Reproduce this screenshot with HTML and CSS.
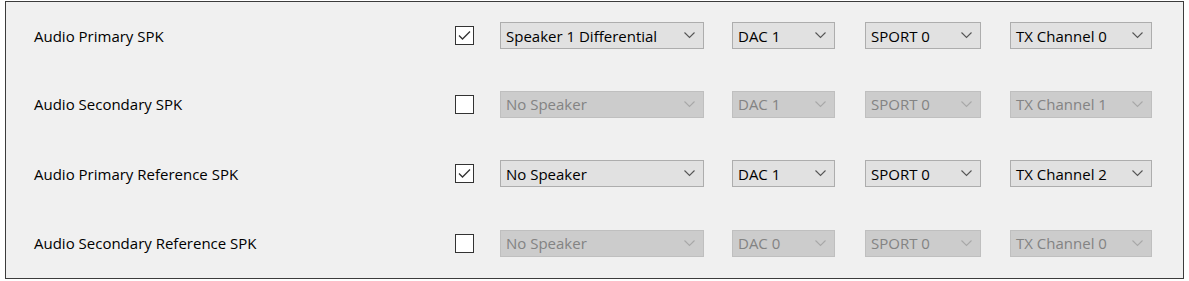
FILE: index.html
```html
<!DOCTYPE html>
<html lang="en">
<head>
    <meta charset="UTF-8">
    <title>Audio Speaker Routing</title>
    <link rel="stylesheet" href="styles.css">
</head>
<body>

    <div class="panel">
        <!-- Audio Primary SPK -->
        <div class="label">Audio Primary SPK</div>
        <span class="check on"><svg viewBox="0 0 17 17"><path d="M3 8.5 L6.5 12 L14 4.5"/></svg></span>
        <div class="combo w-spk"><span>Speaker 1 Differential</span><svg class="chev" viewBox="0 0 11 7"><path d="M0.5 0.5 L5.5 5.5 L10.5 0.5"/></svg></div>
        <div class="combo w-dac"><span>DAC 1</span><svg class="chev" viewBox="0 0 11 7"><path d="M0.5 0.5 L5.5 5.5 L10.5 0.5"/></svg></div>
        <div class="combo w-sport"><span>SPORT 0</span><svg class="chev" viewBox="0 0 11 7"><path d="M0.5 0.5 L5.5 5.5 L10.5 0.5"/></svg></div>
        <div class="combo w-tx"><span>TX Channel 0</span><svg class="chev" viewBox="0 0 11 7"><path d="M0.5 0.5 L5.5 5.5 L10.5 0.5"/></svg></div>

        <!-- Audio Secondary SPK -->
        <div class="label">Audio Secondary SPK</div>
        <span class="check"></span>
        <div class="combo w-spk disabled"><span>No Speaker</span><svg class="chev" viewBox="0 0 11 7"><path d="M0.5 0.5 L5.5 5.5 L10.5 0.5"/></svg></div>
        <div class="combo w-dac disabled"><span>DAC 1</span><svg class="chev" viewBox="0 0 11 7"><path d="M0.5 0.5 L5.5 5.5 L10.5 0.5"/></svg></div>
        <div class="combo w-sport disabled"><span>SPORT 0</span><svg class="chev" viewBox="0 0 11 7"><path d="M0.5 0.5 L5.5 5.5 L10.5 0.5"/></svg></div>
        <div class="combo w-tx disabled"><span>TX Channel 1</span><svg class="chev" viewBox="0 0 11 7"><path d="M0.5 0.5 L5.5 5.5 L10.5 0.5"/></svg></div>

        <!-- Audio Primary Reference SPK -->
        <div class="label">Audio Primary Reference SPK</div>
        <span class="check on"><svg viewBox="0 0 17 17"><path d="M3 8.5 L6.5 12 L14 4.5"/></svg></span>
        <div class="combo w-spk"><span>No Speaker</span><svg class="chev" viewBox="0 0 11 7"><path d="M0.5 0.5 L5.5 5.5 L10.5 0.5"/></svg></div>
        <div class="combo w-dac"><span>DAC 1</span><svg class="chev" viewBox="0 0 11 7"><path d="M0.5 0.5 L5.5 5.5 L10.5 0.5"/></svg></div>
        <div class="combo w-sport"><span>SPORT 0</span><svg class="chev" viewBox="0 0 11 7"><path d="M0.5 0.5 L5.5 5.5 L10.5 0.5"/></svg></div>
        <div class="combo w-tx"><span>TX Channel 2</span><svg class="chev" viewBox="0 0 11 7"><path d="M0.5 0.5 L5.5 5.5 L10.5 0.5"/></svg></div>

        <!-- Audio Secondary Reference SPK -->
        <div class="label">Audio Secondary Reference SPK</div>
        <span class="check"></span>
        <div class="combo w-spk disabled"><span>No Speaker</span><svg class="chev" viewBox="0 0 11 7"><path d="M0.5 0.5 L5.5 5.5 L10.5 0.5"/></svg></div>
        <div class="combo w-dac disabled"><span>DAC 0</span><svg class="chev" viewBox="0 0 11 7"><path d="M0.5 0.5 L5.5 5.5 L10.5 0.5"/></svg></div>
        <div class="combo w-sport disabled"><span>SPORT 0</span><svg class="chev" viewBox="0 0 11 7"><path d="M0.5 0.5 L5.5 5.5 L10.5 0.5"/></svg></div>
        <div class="combo w-tx disabled"><span>TX Channel 0</span><svg class="chev" viewBox="0 0 11 7"><path d="M0.5 0.5 L5.5 5.5 L10.5 0.5"/></svg></div>
    </div>

</body>
</html>
```

FILE: styles.css
```css
body {
    margin: 1px 5px 0 5px;
    background: #ffffff;
    font-family: "Open Sans", "Noto Sans", sans-serif;
    font-size: 15px;
    color: #000;
}

/* Settings frame */
.panel {
    width: 1149px;
    height: 276px;
    padding-left: 28px;
    background: #f0f0f0;
    border: 1px solid #3c3c3c;
    display: grid;
    grid-template-columns: 421px 45px 232px 133px 145px 140px;
    grid-template-rows: 67px 70px 69px 70px;
    align-items: center;
}

.label {
    white-space: nowrap;
}

/* Checkbox */
.check {
    width: 17px;
    height: 17px;
    background: #fff;
    border: 1px solid #333;
    display: block;
}
.check svg {
    width: 17px;
    height: 17px;
    display: block;
    fill: none;
    stroke: #333;
    stroke-width: 1.3;
}

/* Combo boxes */
.combo {
    height: 25px;
    box-sizing: content-box;
    background: #e1e1e1;
    border: 1px solid #adadad;
    display: flex;
    align-items: center;
    justify-content: space-between;
    padding: 0 8px 0 5px;
    white-space: nowrap;
}
.combo .chev {
    width: 11px;
    height: 7px;
    fill: none;
    stroke: #555;
    stroke-width: 1.1;
}
.combo.disabled {
    background: #cccccc;
    border-color: #bfbfbf;
    color: #838383;
}
.combo.disabled .chev { stroke: #a8a8a8; }

.w-spk { width: 189px; }
.w-dac { width: 88px; }
.w-sport { width: 101px; }
.w-tx { width: 127px; }
```
